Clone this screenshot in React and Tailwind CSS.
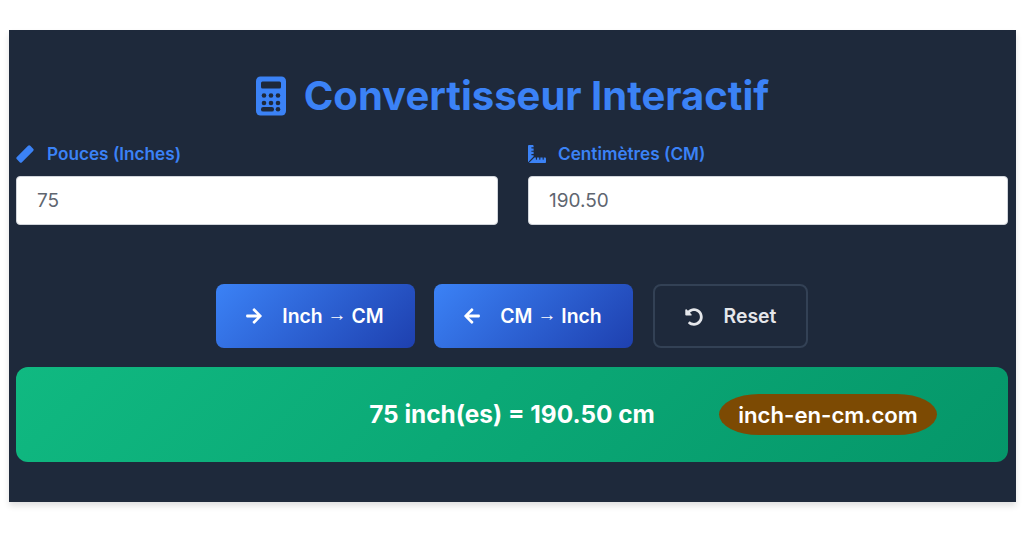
import React from "react";
import { FaRulerCombined, FaArrowRight, FaArrowLeft, FaUndoAlt } from "react-icons/fa";

function CalcIcon() {
  const rows = [19.5, 27];
  return (
    <svg viewBox="0 0 30 40" className="w-[30px] h-[40px] shrink-0">
      <rect x="0" y="0.5" width="30" height="39" rx="4.5" fill="#3b82f6" />
      <rect x="5" y="5.5" width="20" height="7" rx="1.5" fill="#1e293b" />
      {rows.map((y) =>
        [8, 15, 22].map((x) => <circle key={x + "-" + y} cx={x} cy={y} r="2.3" fill="#1e293b" />)
      )}
      <rect x="5" y="31" width="13" height="4.6" rx="2.2" fill="#1e293b" />
      <circle cx="22" cy="33.3" r="2.3" fill="#1e293b" />
    </svg>
  );
}

function RulerIcon() {
  return (
    <svg viewBox="0 0 18 18" className="w-[18px] h-[18px] shrink-0">
      <rect x="-0.5" y="5.4" width="19" height="7.2" rx="1.6" fill="#3b82f6" transform="rotate(-45 9 9)" />
    </svg>
  );
}

function Field({ icon, label, value, className, gap }) {
  return (
    <div className={"flex flex-col flex-none " + className}>
      <label className={"flex items-center h-[27px] text-[17.2px] font-semibold text-[#3b82f6] leading-none " + gap}>
        {icon}
        <span>{label}</span>
      </label>
      <div className="mt-[9px] h-[49px] bg-white rounded-[4px] border border-[#d1d5db] flex items-center pl-5 pt-[2px] text-[19px] text-[#5f6670]">
        {value}
      </div>
    </div>
  );
}

function Btn({ icon, children, primary, className }) {
  return (
    <button
      className={
        "h-[64px] rounded-lg flex items-center justify-center text-[19.4px] font-semibold " +
        (primary
          ? "bg-[linear-gradient(135deg,#3b82f6,#1e40af)] text-white "
          : "border-2 border-[#334155] text-[#e5e7eb] ") +
        className
      }
    >
      {icon}
      <span>{children}</span>
    </button>
  );
}

const Arrow = () => (
  <span className="font-['Liberation_Sans',sans-serif] font-normal text-[19px] align-[2px]">→</span>
);

export default function App() {
  return (
    <div className="w-[1024px] h-[536px] bg-white pt-[30px] pl-[9px] font-['Inter',sans-serif]">
      <div className="w-[1007px] h-[472px] bg-[#1e293b] px-[7px] pt-[44px] flex flex-col shadow-[0_4px_6px_rgba(0,0,0,0.12)]">
        <h1 className="flex items-center justify-center gap-[18px] h-[43px] text-[40px] font-bold text-[#3b82f6] leading-none">
          <CalcIcon />
          <span>Convertisseur Interactif</span>
        </h1>
        <div className="flex gap-[30px] mt-[23px]">
          <Field className="w-[482px]" gap="gap-[13px]" icon={<RulerIcon />} label="Pouces (Inches)" value="75" />
          <Field className="w-[480px]" gap="gap-[12px]" icon={<FaRulerCombined className="w-[18px] h-[18px] shrink-0" />} label="Centimètres (CM)" value="190.50" />
        </div>
        <div className="flex justify-center gap-[19px] mt-[59px] pr-[1px]">
          <Btn primary className="w-[199px] gap-[19px] pr-[2px]" icon={<FaArrowRight className="w-[18px] h-[18px]" />}>Inch <Arrow /> CM</Btn>
          <Btn primary className="w-[199px] gap-[19px] pr-[2px]" icon={<FaArrowLeft className="w-[18px] h-[18px]" />}>CM <Arrow /> Inch</Btn>
          <Btn className="w-[155px] gap-[21px] ml-[1px] pt-[1px]" icon={<FaUndoAlt className="w-[18px] h-[18px]" />}>Reset</Btn>
        </div>
        <div className="relative mt-[19px] mr-[1px] h-[95px] rounded-xl bg-[linear-gradient(135deg,#10b981,#059669)] flex items-center justify-center text-[24.4px] font-bold text-white">
          75 inch(es) = 190.50 cm
          <div className="absolute left-[703px] top-[27px] w-[218px] h-[41px] rounded-[40px/20.5px] bg-[#7c4a03] flex items-center justify-center text-[22.2px] font-semibold text-white">
            inch-en-cm.com
          </div>
        </div>
      </div>
    </div>
  );
}
